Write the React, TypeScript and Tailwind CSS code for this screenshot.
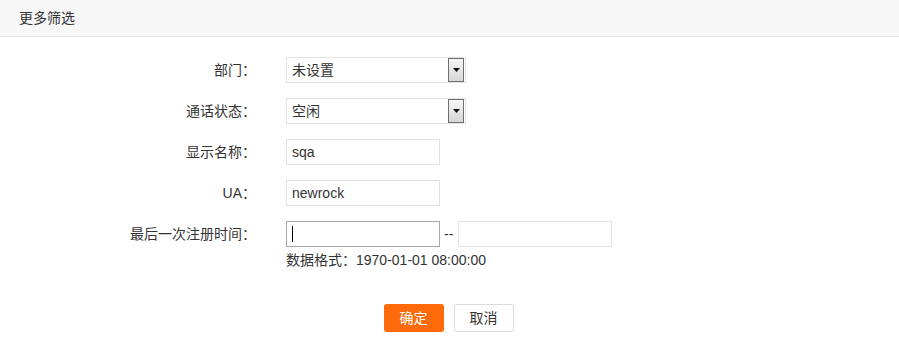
import React from "react";

const FONT = { fontFamily: '"Liberation Sans", "Noto Sans CJK SC", sans-serif' };

function Row({ label, children }: { label: string; children: React.ReactNode }) {
  return (
    <div className="flex items-center h-[26px]">
      <div className="w-[256px] text-right text-[14px] text-[#333] leading-none">{label}</div>
      <div className="ml-[30px] flex items-center">{children}</div>
    </div>
  );
}

function Select({ value }: { value: string }) {
  return (
    <div className="w-[180px] h-[26px] border border-[#e2e2e2] bg-white flex items-center">
      <span className="flex-1 pl-[5px] text-[14px] text-[#333] leading-none">{value}</span>
      <span className="w-[16px] h-[24px] mr-[1px] border border-[#6f6f6f] bg-gradient-to-b from-[#f6f6f6] to-[#d6d6d6] flex items-center justify-center">
        <svg width="7" height="4" viewBox="0 0 7 4">
          <path d="M0 0h7L3.5 4z" fill="#111" />
        </svg>
      </span>
    </div>
  );
}

function Input({ value, focused }: { value?: string; focused?: boolean }) {
  return (
    <div
      className={
        "w-[154px] h-[26px] border bg-white flex items-center pl-[5px] text-[14px] text-[#333] leading-none " +
        (focused ? "border-[#a9a9a9]" : "border-[#e2e2e2]")
      }
    >
      {focused ? <span className="w-px h-[16px] bg-black" /> : value}
    </div>
  );
}

export default function App() {
  return (
    <div className="w-[899px] h-[344px] bg-white" style={FONT}>
      <div className="h-[37px] bg-[#f7f7f7] border-b border-[#e6e6e6] flex items-center pl-[19px] text-[14px] text-[#333]">
        更多筛选
      </div>
      <div className="pt-[20px] flex flex-col gap-[15px]">
        <Row label="部门：">
          <Select value="未设置" />
        </Row>
        <Row label="通话状态：">
          <Select value="空闲" />
        </Row>
        <Row label="显示名称：">
          <Input value="sqa" />
        </Row>
        <Row label="UA：">
          <Input value="newrock" />
        </Row>
        <div>
          <Row label="最后一次注册时间：">
            <Input focused />
            <span className="ml-[4px] mr-[5px] text-[14px] text-[#333]">--</span>
            <Input />
          </Row>
          <div className="ml-[286px] mt-[4px] text-[14px] text-[#333] leading-[18px]">
            数据格式：1970-01-01 08:00:00
          </div>
        </div>
      </div>
      <div className="mt-[35px] flex justify-center gap-[10px] pr-[2px]">
        <button className="w-[60px] h-[28px] rounded-[3px] bg-[#ff6a0a] text-white text-[14px]">确定</button>
        <button className="w-[60px] h-[28px] rounded-[3px] border border-[#dcdcdc] bg-white text-[#333] text-[14px]">取消</button>
      </div>
    </div>
  );
}
